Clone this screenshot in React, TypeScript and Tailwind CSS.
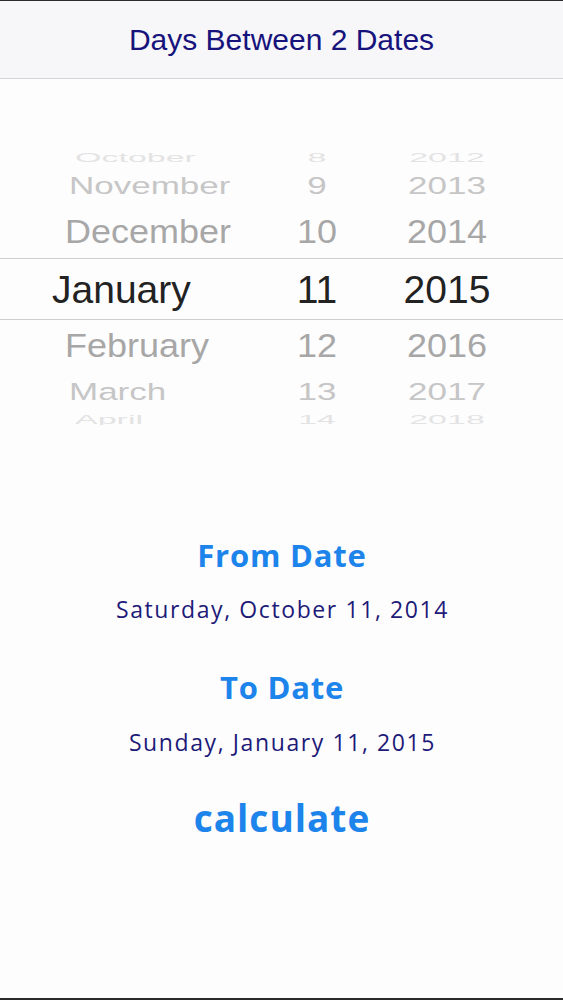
import React from 'react';

type Row = {
  month: string;
  day: string;
  year: string;
  h: string;
  pad: string;
  monthPl: string;
  size: string;
  scale: string;
  color: string;
};

const rows: Row[] = [
  { month: 'October', day: '8', year: '2012', h: 'h-[30px]', pad: 'pt-[4px]', monthPl: 'pl-[75px]', size: 'text-[34px]', scale: 'scale-y-[0.4]', color: 'text-[#e3e3e3]' },
  { month: 'November', day: '9', year: '2013', h: 'h-[36px]', pad: 'pb-[6px]', monthPl: 'pl-[69px]', size: 'text-[35px]', scale: 'scale-y-[0.7]', color: 'text-[#c6c6c6]' },
  { month: 'December', day: '10', year: '2014', h: 'h-[52px]', pad: '', monthPl: 'pl-[65px]', size: 'text-[36px]', scale: 'scale-y-[0.92]', color: 'text-[#a7a7a7]' },
];

const rowsBelow: Row[] = [
  { month: 'February', day: '12', year: '2016', h: 'h-[52px]', pad: '', monthPl: 'pl-[65px]', size: 'text-[36px]', scale: 'scale-y-[0.92]', color: 'text-[#a7a7a7]' },
  { month: 'March', day: '13', year: '2017', h: 'h-[36px]', pad: 'pt-[2px]', monthPl: 'pl-[69px]', size: 'text-[35px]', scale: 'scale-y-[0.7]', color: 'text-[#c6c6c6]' },
  { month: 'April', day: '14', year: '2018', h: 'h-[20px]', pad: 'pt-[2px]', monthPl: 'pl-[75px]', size: 'text-[34px]', scale: 'scale-y-[0.4]', color: 'text-[#e3e3e3]' },
];

const PickerRow: React.FC<{ row: Row }> = ({ row }) => (
  <div className={`flex items-center ${row.h} ${row.pad} ${row.size} ${row.color} leading-none`}>
    <div className={`w-[260px] ${row.monthPl}`}>
      <span className={`inline-block ${row.scale}`}>{row.month}</span>
    </div>
    <div className="w-[114px] text-center">
      <span className={`inline-block ${row.scale}`}>{row.day}</span>
    </div>
    <div className="w-[146px] text-center">
      <span className={`inline-block ${row.scale}`}>{row.year}</span>
    </div>
  </div>
);

export default function App() {
  return (
    <div className="w-full h-[1000px] flex flex-col bg-[#fefdfe] border-t border-[#2b2b2b] font-['Liberation_Sans',Arial,sans-serif]">
      <header className="h-[78px] shrink-0 bg-[#f7f6f9] border-b border-[#d6d6d8] flex items-center justify-center">
        <h1 className="text-[30px] text-[#17137c] leading-none">Days Between 2 Dates</h1>
      </header>

      {/* date wheel */}
      <div className="h-[71px] shrink-0" />
      <div className="h-[275px] shrink-0 overflow-hidden">
        <div className="-mt-[10px]">
          {rows.map((r) => (
            <PickerRow key={r.month} row={r} />
          ))}
          <div className="h-[62px] border-y border-[#cfcfd1] flex items-center text-[39px] text-[#222222] leading-none">
            <div className="w-[260px] pl-[52px]">January</div>
            <div className="w-[114px] text-center">11</div>
            <div className="w-[146px] text-center">2015</div>
          </div>
          {rowsBelow.map((r) => (
            <PickerRow key={r.month} row={r} />
          ))}
        </div>
      </div>

      <div className="flex flex-col items-center font-['Open_Sans','Noto_Sans',sans-serif]">
        <div className="mt-[110px] h-[40px] flex items-center pl-[1px] text-[31px] tracking-[0.8px] font-bold text-[#1c84ea]">From Date</div>
        <div className="mt-[19px] h-[30px] flex items-center pl-[2px] text-[23px] tracking-[1.6px] text-[#1d1a78]">Saturday, October 11, 2014</div>
        <div className="mt-[43px] h-[40px] flex items-center pl-[1px] text-[31px] tracking-[0.8px] font-bold text-[#1c84ea]">To Date</div>
        <div className="mt-[20px] h-[30px] flex items-center pl-[2px] text-[23px] tracking-[1.6px] text-[#1d1a78]">Sunday, January 11, 2015</div>
        <button className="mt-[36px] h-[50px] flex items-center pl-[1px] text-[37px] tracking-[1px] font-bold text-[#1c84ea]">calculate</button>
      </div>

      <div className="flex-1" />
      <div className="h-[2px] shrink-0 bg-[#2b2b2b]" />
    </div>
  );
}
